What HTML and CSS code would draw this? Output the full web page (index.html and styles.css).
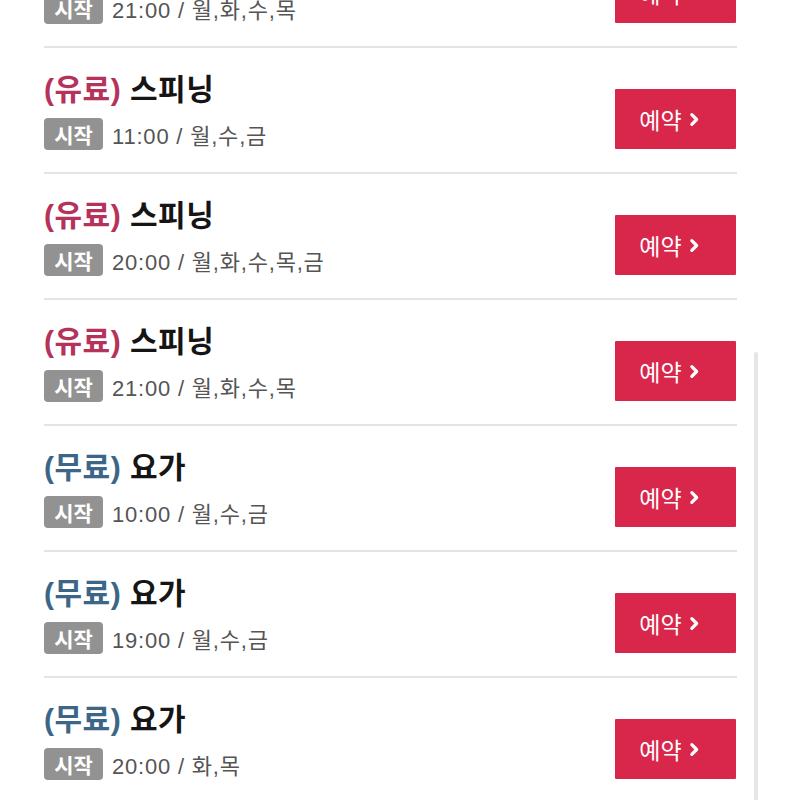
FILE: index.html
```html
<!DOCTYPE html>
<html lang="ko">
<head>
<meta charset="utf-8">
<link rel="stylesheet" href="styles.css">
</head>
<body>
<div class="page">
  <ul class="list">
    <li class="row">
      <div class="info">
        <div class="title"><span class="paid">(유료)</span> 스피닝</div>
        <div class="meta"><span class="badge">시작</span><span class="time">21:00 / 월,화,수,목</span></div>
      </div>
      <button class="btn">예약<svg class="chev" viewBox="0 0 10 14"><path d="M2.5 2.5 L7 7 L2.5 11.5"/></svg></button>
    </li>
    <li class="row">
      <div class="info">
        <div class="title"><span class="paid">(유료)</span> 스피닝</div>
        <div class="meta"><span class="badge">시작</span><span class="time">11:00 / 월,수,금</span></div>
      </div>
      <button class="btn">예약<svg class="chev" viewBox="0 0 10 14"><path d="M2.5 2.5 L7 7 L2.5 11.5"/></svg></button>
    </li>
    <li class="row">
      <div class="info">
        <div class="title"><span class="paid">(유료)</span> 스피닝</div>
        <div class="meta"><span class="badge">시작</span><span class="time">20:00 / 월,화,수,목,금</span></div>
      </div>
      <button class="btn">예약<svg class="chev" viewBox="0 0 10 14"><path d="M2.5 2.5 L7 7 L2.5 11.5"/></svg></button>
    </li>
    <li class="row">
      <div class="info">
        <div class="title"><span class="paid">(유료)</span> 스피닝</div>
        <div class="meta"><span class="badge">시작</span><span class="time">21:00 / 월,화,수,목</span></div>
      </div>
      <button class="btn">예약<svg class="chev" viewBox="0 0 10 14"><path d="M2.5 2.5 L7 7 L2.5 11.5"/></svg></button>
    </li>
    <li class="row">
      <div class="info">
        <div class="title"><span class="free">(무료)</span> 요가</div>
        <div class="meta"><span class="badge">시작</span><span class="time">10:00 / 월,수,금</span></div>
      </div>
      <button class="btn">예약<svg class="chev" viewBox="0 0 10 14"><path d="M2.5 2.5 L7 7 L2.5 11.5"/></svg></button>
    </li>
    <li class="row">
      <div class="info">
        <div class="title"><span class="free">(무료)</span> 요가</div>
        <div class="meta"><span class="badge">시작</span><span class="time">19:00 / 월,수,금</span></div>
      </div>
      <button class="btn">예약<svg class="chev" viewBox="0 0 10 14"><path d="M2.5 2.5 L7 7 L2.5 11.5"/></svg></button>
    </li>
    <li class="row">
      <div class="info">
        <div class="title"><span class="free">(무료)</span> 요가</div>
        <div class="meta"><span class="badge">시작</span><span class="time">20:00 / 화,목</span></div>
      </div>
      <button class="btn">예약<svg class="chev" viewBox="0 0 10 14"><path d="M2.5 2.5 L7 7 L2.5 11.5"/></svg></button>
    </li>
  </ul>
  <div class="scrollbar"></div>
</div>
</body>
</html>
```

FILE: styles.css
```css
html, body {
  margin: 0;
  padding: 0;
  background: #ffffff;
  overflow: hidden;
}
body {
  font-family: "Liberation Sans", "Noto Sans CJK KR", sans-serif;
  color: #111;
}
.page {
  position: relative;
  width: 800px;
  height: 800px;
  overflow: hidden;
}
.list {
  list-style: none;
  margin: -78px 0 0 44px;
  padding: 0;
  width: 693px;
}
.row {
  height: 124px;
  border-bottom: 2px solid #e4e4e4;
  display: flex;
  justify-content: space-between;
  align-items: flex-start;
}
.info {
  padding-top: 25px;
  display: flex;
  flex-direction: column;
  gap: 11px;
}
.title {
  font-size: 30px;
  line-height: 34px;
  font-weight: bold;
  letter-spacing: 0.5px;
  color: #151515;
  white-space: nowrap;
}
.paid { color: #b5335a; }
.free { color: #3b6687; }
.meta {
  display: flex;
  align-items: center;
  gap: 9px;
  height: 32px;
}
.badge {
  display: inline-flex;
  align-items: center;
  justify-content: center;
  width: 59px;
  height: 32px;
  border-radius: 4px;
  background: #929292;
  color: #fff;
  font-size: 21px;
  font-weight: bold;
}
.time {
  font-size: 22px;
  letter-spacing: 0.8px;
  color: #555;
  white-space: nowrap;
}
.btn {
  margin-top: 41px;
  margin-right: 1px;
  width: 121px;
  height: 60px;
  border: none;
  border-radius: 1px;
  background: #d8274b;
  color: #fff;
  font-family: "Liberation Sans", "Noto Sans CJK KR", sans-serif;
  font-size: 23px;
  display: flex;
  align-items: center;
  justify-content: center;
  gap: 7px;
  padding: 0 12px 0 0;
}
.chev {
  width: 11px;
  height: 15px;
  fill: none;
  stroke: #fff;
  stroke-width: 3;
  stroke-linecap: round;
  stroke-linejoin: round;
}
.scrollbar {
  position: absolute;
  left: 754px;
  top: 352px;
  width: 4px;
  height: 460px;
  border-radius: 2px;
  background: #e6e6e6;
}
```
